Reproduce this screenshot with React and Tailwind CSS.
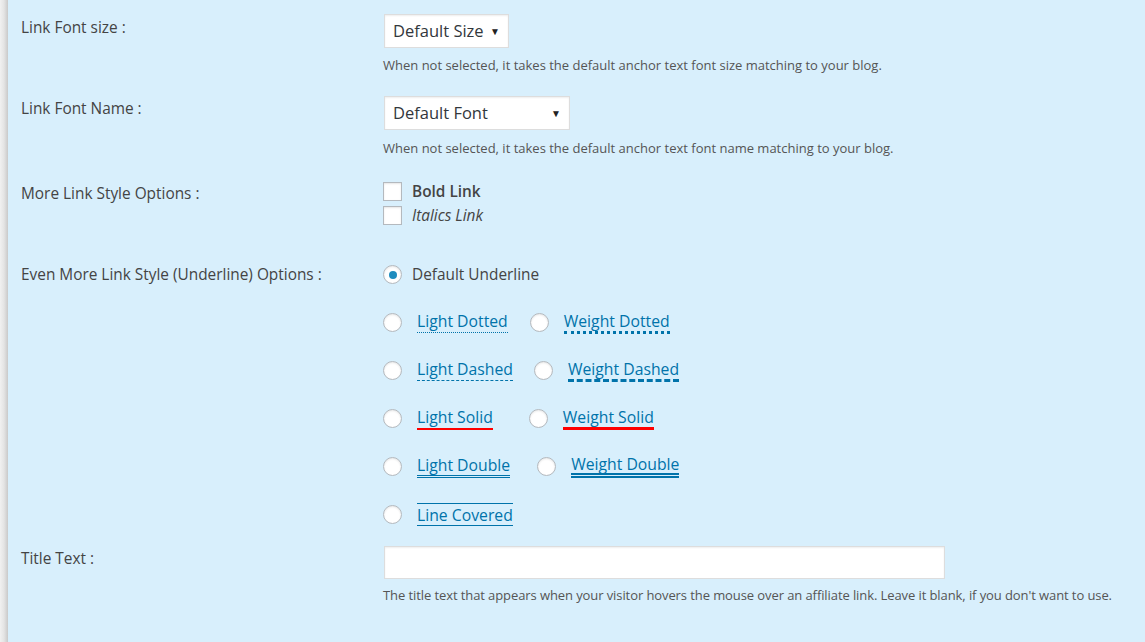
import React from "react";

const font = { fontFamily: '"Open Sans", "Noto Sans", sans-serif' };

function Row({ label, labelTop, children, className = "" }) {
  return (
    <div className={`flex ${className}`}>
      <div className="w-[362px] shrink-0 text-[15.4px] leading-5 text-[#444]" style={{ paddingTop: labelTop }}>
        {label}
      </div>
      <div className="flex-1">{children}</div>
    </div>
  );
}

function Select({ value, width }) {
  return (
    <div
      className="h-[34px] bg-white border border-[#ddd] shadow-[inset_0_1px_2px_rgba(0,0,0,0.07)] flex items-center justify-between pl-[8px] pr-[8px] text-[16.5px] text-[#32373c] ml-px"
      style={{ width }}
    >
      <span>{value}</span>
      <span className="text-[10px] text-[#222]">▼</span>
    </div>
  );
}

function Radio({ checked }) {
  return (
    <span className="w-[19px] h-[19px] rounded-full bg-white border border-[#b4b9be] shadow-[inset_0_1px_2px_rgba(0,0,0,0.1)] flex items-center justify-center shrink-0">
      {checked && <span className="w-[8px] h-[8px] rounded-full bg-[#1e8cbe]" />}
    </span>
  );
}

function Check() {
  return <span className="w-[19px] h-[19px] bg-white border border-[#b4b9be] shadow-[inset_0_1px_2px_rgba(0,0,0,0.1)] shrink-0" />;
}

const options = [
  [
    { label: "Light Dotted", cls: "border-b border-dotted border-[#0073aa] pb-[2px]", gap: 22 },
    { label: "Weight Dotted", cls: "border-b-[3px] border-dotted border-[#0073aa] pb-[1px]", gap: 0 },
  ],
  [
    { label: "Light Dashed", cls: "border-b border-dashed border-[#0073aa] pb-[2px]", gap: 21 },
    { label: "Weight Dashed", cls: "border-b-[3px] border-dashed border-[#0073aa] pb-[1px]", gap: 0 },
  ],
  [
    { label: "Light Solid", cls: "border-b-[2px] border-solid border-[#f00] pb-[2px]", gap: 36 },
    { label: "Weight Solid", cls: "border-b-[3px] border-solid border-[#f00] pb-[1px]", gap: 0 },
  ],
  [
    { label: "Light Double", cls: "border-b-[3px] border-double border-[#0073aa] pb-[1px]", gap: 27 },
    { label: "Weight Double", cls: "border-b-[5px] border-double border-[#0073aa]", gap: 0 },
  ],
  [{ label: "Line Covered", cls: "border-y border-solid border-[#0073aa] pt-[2px] pb-[1px]", gap: 0 }],
];

export default function App() {
  return (
    <div className="w-[1145px] h-[642px] flex bg-[#d8effc] overflow-hidden" style={font}>
      <div className="w-[8px] shrink-0 bg-gradient-to-r from-[#f1f1f1] via-[#e4e4e4] to-[#c9c9c9]" />
      <div className="flex-1 pl-[13px]">
        <Row label="Link Font size :" labelTop={4} className="pt-[14px]">
          <Select value="Default Size" width={125} />
          <p className="mt-[8px] text-[13px] leading-[18px] text-[#555]">
            When not selected, it takes the default anchor text font size matching to your blog.
          </p>
        </Row>

        <Row label="Link Font Name :" labelTop={3} className="pt-[22px]">
          <Select value="Default Font" width={186} />
          <p className="mt-[9px] text-[13px] leading-[18px] text-[#555]">
            When not selected, it takes the default anchor text font name matching to your blog.
          </p>
        </Row>

        <Row label="More Link Style Options :" labelTop={2} className="pt-[25px]">
          <div className="flex items-center gap-[10px] h-[19px]">
            <Check />
            <span className="text-[15.4px] font-semibold text-[#444]">Bold Link</span>
          </div>
          <div className="flex items-center gap-[10px] h-[19px] mt-[5px]">
            <Check />
            <span className="text-[15.4px] italic text-[#444]">Italics Link</span>
          </div>
        </Row>

        <Row label="Even More Link Style (Underline) Options :" labelTop={0} className="pt-[40px]">
          <div className="flex items-center gap-[10px] h-[19px]">
            <Radio checked />
            <span className="text-[15.4px] text-[#444]">Default Underline</span>
          </div>
          {options.map((row, i) => (
            <div key={i} className="flex items-center h-[19px] mt-[29px]">
              {row.map((o) => (
                <div key={o.label} className="flex items-center" style={{ marginRight: o.gap }}>
                  <Radio />
                  <span className={`ml-[15px] text-[15.75px] leading-[18px] text-[#0073aa] ${o.cls}`}>{o.label}</span>
                </div>
              ))}
            </div>
          ))}
        </Row>

        <Row label="Title Text :" labelTop={3} className="pt-[22px]">
          <div className="w-[561px] h-[33px] ml-px bg-white border border-[#ddd] shadow-[inset_0_1px_2px_rgba(0,0,0,0.07)]" />
          <p className="mt-[7px] text-[13px] leading-[18px] text-[#555] tracking-[-0.09px]">
            The title text that appears when your visitor hovers the mouse over an affiliate link. Leave it blank, if you don't want to use.
          </p>
        </Row>
      </div>
    </div>
  );
}
